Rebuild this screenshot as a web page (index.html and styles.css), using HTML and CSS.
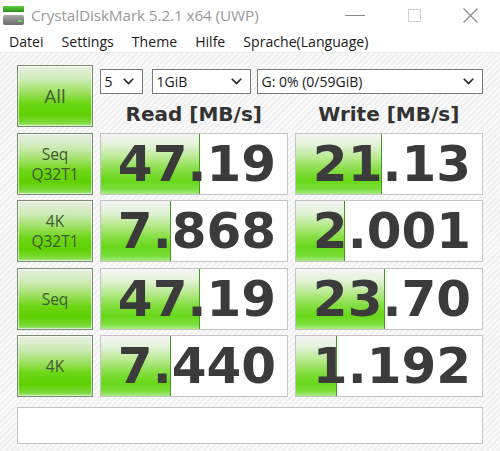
FILE: index.html
```html
<!DOCTYPE html>
<html>
<head>
<meta charset="utf-8">
<link rel="stylesheet" href="styles.css">
</head>
<body>
<div class="window">
  <div class="titlebar">
    <svg class="app-icon" width="22" height="22" viewBox="0 0 22 22">
      <defs>
        <linearGradient id="gtop" x1="0" y1="0" x2="0" y2="1">
          <stop offset="0" stop-color="#5fcf3a"/>
          <stop offset="1" stop-color="#2e8f1e"/>
        </linearGradient>
        <linearGradient id="gbody" x1="0" y1="0" x2="0" y2="1">
          <stop offset="0" stop-color="#a8a8a8"/>
          <stop offset="1" stop-color="#6a6a6a"/>
        </linearGradient>
      </defs>
      <rect x="0" y="1" width="21" height="6" fill="url(#gtop)"/>
      <rect x="0" y="10" width="21" height="10" rx="2" fill="url(#gbody)"/>
      <rect x="15" y="15" width="4" height="2" fill="#5ee04a"/>
    </svg>
    <span class="title">CrystalDiskMark 5.2.1 x64 (UWP)</span>
    <div class="win-controls">
      <span class="wc wc-min"><svg width="20" height="12" viewBox="0 0 20 12"><line x1="0" y1="6.5" x2="20" y2="6.5" stroke="#8a8a8a" stroke-width="1"/></svg></span>
      <span class="wc wc-max"><svg width="13" height="13" viewBox="0 0 13 13"><rect x="0.5" y="0.5" width="12" height="12" fill="none" stroke="#d0d0d0" stroke-width="1"/></svg></span>
      <span class="wc wc-close"><svg width="15" height="15" viewBox="0 0 15 15"><path d="M0.5 0.5 L14.5 14.5 M14.5 0.5 L0.5 14.5" stroke="#8a8a8a" stroke-width="1.1" fill="none"/></svg></span>
    </div>
  </div>
  <div class="menubar">
    <span class="menu-item">Datei</span>
    <span class="menu-item">Settings</span>
    <span class="menu-item">Theme</span>
    <span class="menu-item">Hilfe</span>
    <span class="menu-item">Sprache(Language)</span>
  </div>
  <div class="main">
    <div class="grid">
      <div class="btn btn-all">All</div>
      <div class="controls">
        <div class="selects">
          <div class="select sel-count"><span>5</span><svg class="chev" width="11" height="7" viewBox="0 0 11 7"><path d="M0.8 0.8 L5.5 5.5 L10.2 0.8" stroke="#222" stroke-width="1.6" fill="none"/></svg></div>
          <div class="select sel-size"><span>1GiB</span><svg class="chev" width="11" height="7" viewBox="0 0 11 7"><path d="M0.8 0.8 L5.5 5.5 L10.2 0.8" stroke="#222" stroke-width="1.6" fill="none"/></svg></div>
          <div class="select sel-drive"><span>G: 0% (0/59GiB)</span><svg class="chev" width="11" height="7" viewBox="0 0 11 7"><path d="M0.8 0.8 L5.5 5.5 L10.2 0.8" stroke="#222" stroke-width="1.6" fill="none"/></svg></div>
        </div>
        <div class="heads">
          <div class="head">Read [MB/s]</div>
          <div class="head">Write [MB/s]</div>
        </div>
      </div>

      <div class="btn"><span>Seq</span><span>Q32T1</span></div>
      <div class="value"><div class="bar" style="width:99px"></div><span class="num">47.19</span></div>
      <div class="value"><div class="bar" style="width:86px"></div><span class="num">21.13</span></div>

      <div class="btn"><span>4K</span><span>Q32T1</span></div>
      <div class="value"><div class="bar" style="width:70px"></div><span class="num">7.868</span></div>
      <div class="value"><div class="bar" style="width:49px"></div><span class="num">2.001</span></div>

      <div class="btn"><span>Seq</span></div>
      <div class="value"><div class="bar" style="width:99px"></div><span class="num">47.19</span></div>
      <div class="value"><div class="bar" style="width:89px"></div><span class="num">23.70</span></div>

      <div class="btn"><span>4K</span></div>
      <div class="value"><div class="bar" style="width:70px"></div><span class="num">7.440</span></div>
      <div class="value"><div class="bar" style="width:41px"></div><span class="num">1.192</span></div>
    </div>
    <div class="comment"></div>
  </div>
</div>
</body>
</html>
```

FILE: styles.css
```css
html, body {
  margin: 0;
  padding: 0;
}
body {
  width: 500px;
  height: 451px;
  overflow: hidden;
  background: #ffffff;
}
.window {
  width: 500px;
  height: 451px;
  display: flex;
  flex-direction: column;
}
.titlebar {
  height: 30px;
  display: flex;
  align-items: center;
  background: #ffffff;
}
.app-icon {
  margin-left: 3px;
  margin-right: 6px;
  margin-top: 1px;
}
.title {
  font-family: "Open Sans", "Noto Sans", sans-serif;
  font-size: 15.3px;
  color: #9a9a9a;
  letter-spacing: -0.1px;
}
.win-controls {
  margin-left: auto;
  display: flex;
  align-items: center;
  height: 30px;
}
.wc {
  display: flex;
  align-items: center;
  justify-content: center;
}
.wc-min {
  width: 20px;
  margin-right: 43px;
}
.wc-max {
  width: 13px;
  margin-right: 42px;
}
.wc-close {
  width: 15px;
  margin-right: 22px;
}
.menubar {
  height: 22px;
  display: flex;
  align-items: center;
  gap: 18px;
  padding-left: 9px;
  background: #ffffff;
  border-bottom: 1px solid #ececec;
  font-family: "Open Sans", "Noto Sans", sans-serif;
  font-size: 14.1px;
  color: #1a1a1a;
}
.main {
  flex: 1;
  background-color: #f4f4f4;
  background-image: repeating-linear-gradient(135deg, #f1f1f1 0px, #f1f1f1 2px, #fafafa 2px, #fafafa 4px);
  padding: 12px 17px 0 17px;
}
.grid {
  display: grid;
  grid-template-columns: 76px 1fr 1fr;
  grid-template-rows: 62px 62px 62px 62px 62px;
  column-gap: 6.5px;
  row-gap: 5.5px;
}
.btn {
  box-sizing: border-box;
  border: 1px solid #7d8a78;
  box-shadow: inset 0 0 0 1px rgba(255,255,255,0.55);
  background: linear-gradient(to bottom, #e8efe2 0%, #cdebb6 22%, #9be05c 45%, #6cd614 62%, #5fd000 80%, #7ada38 94%, #a8e880 100%);
  display: flex;
  flex-direction: column;
  align-items: center;
  justify-content: center;
  font-family: "Open Sans", "Noto Sans", sans-serif;
  font-size: 15.5px;
  line-height: 20px;
  color: #415834;
}
.btn-all {
  font-size: 19px;
}
.controls {
  grid-column: 2 / 4;
  display: flex;
  flex-direction: column;
}
.selects {
  display: flex;
  margin-top: 4px;
  height: 25px;
}
.select {
  box-sizing: border-box;
  height: 25px;
  border: 1px solid #7a7a7a;
  background: #ffffff;
  display: flex;
  align-items: center;
  justify-content: space-between;
  padding: 0 8px 0 4px;
  font-family: "Open Sans", "Noto Sans", sans-serif;
  font-size: 14px;
  color: #1a1a1a;
}
.sel-count {
  width: 43px;
  margin-right: 9px;
}
.sel-size {
  width: 99px;
  margin-right: 6px;
}
.sel-drive {
  flex: 1;
}
.heads {
  flex: 1;
  display: grid;
  grid-template-columns: 1fr 1fr;
  column-gap: 6.5px;
  align-items: center;
}
.head {
  text-align: center;
  font-family: "DejaVu Sans", sans-serif;
  font-weight: bold;
  font-size: 20px;
  color: #333333;
  padding-top: 6px;
}
.value {
  position: relative;
  box-sizing: border-box;
  border: 1px solid #c4c4c4;
  background: #ffffff;
  display: flex;
  align-items: center;
  justify-content: flex-end;
  padding-right: 11px;
  overflow: hidden;
}
.bar {
  position: absolute;
  left: 0;
  top: 0;
  bottom: 0;
  box-sizing: border-box;
  border-right: 1px solid #3f9a1e;
  background: linear-gradient(to bottom, #f4f4f4 0%, #e4f2da 18%, #b8ea8e 40%, #86de44 60%, #68d818 78%, #7ade3c 92%, #aaeb84 100%);
}
.num {
  position: relative;
  font-family: "DejaVu Sans", sans-serif;
  font-weight: bold;
  font-size: 50px;
  line-height: 50px;
  color: #3b3b3b;
}
.comment {
  box-sizing: border-box;
  margin-top: 10px;
  height: 37px;
  border: 1px solid #c4c4c4;
  background: #ffffff;
}
```
